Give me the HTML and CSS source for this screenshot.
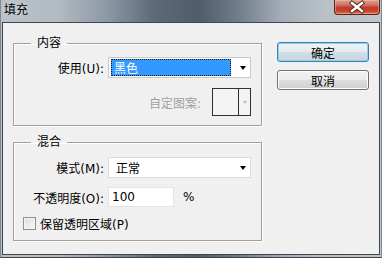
FILE: index.html
```html
<!DOCTYPE html>
<html lang="zh">
<head>
<meta charset="utf-8">
<title>填充</title>
<link rel="stylesheet" href="styles.css">
</head>
<body>
<div class="window">
  <div class="titlebar">
    <span class="title">填充</span>
    <div class="close">
      <svg width="46" height="15" viewBox="0 0 46 15">
        <path d="M18 3 L28 11 M28 3 L18 11" stroke="#4a2620" stroke-width="4.2" stroke-linecap="square" fill="none"/>
        <path d="M18 3 L28 11 M28 3 L18 11" stroke="#ffffff" stroke-width="2.4" stroke-linecap="square" fill="none"/>
      </svg>
    </div>
  </div>
  <div class="client">
    <div class="main">
      <fieldset class="group g-content">
        <legend>内容</legend>
        <div class="row">
          <span class="lbl">使用(U):</span>
          <div class="combo focused">
            <span class="sel"><span class="seltext">黑色</span></span>
            <span class="arrow"></span>
          </div>
        </div>
        <div class="row row-pattern">
          <span class="lbl-dis">自定图案:</span>
          <div class="pattern">
            <span class="swatch"></span>
            <span class="parrow"><span class="tri-dis"></span></span>
          </div>
        </div>
      </fieldset>
      <fieldset class="group g-blend">
        <legend>混合</legend>
        <div class="row">
          <span class="lbl">模式(M):</span>
          <div class="combo">
            <span class="val">正常</span>
            <span class="arrow"></span>
          </div>
        </div>
        <div class="row row-opacity">
          <span class="lbl">不透明度(O):</span>
          <div class="textbox">100</div>
          <span class="pct">%</span>
        </div>
        <div class="row row-check">
          <span class="checkbox"></span>
          <span class="cklabel">保留透明区域(P)</span>
        </div>
      </fieldset>
    </div>
    <div class="buttons">
      <button class="btn default">确定</button>
      <button class="btn">取消</button>
    </div>
  </div>
</div>
</body>
</html>
```
FILE: styles.css
```css
html, body {
  margin: 0;
  padding: 0;
}
body {
  width: 382px;
  height: 258px;
  overflow: hidden;
  font-family: "DejaVu Sans", "Noto Sans CJK SC", sans-serif;
  font-size: 12px;
  color: #000;
}
.window {
  width: 382px;
  height: 258px;
  box-sizing: border-box;
  display: flex;
  flex-direction: column;
  background: linear-gradient(90deg, #b9c0c8 0%, #b2bac2 15%, #8c98a4 28%, #5d6b79 40%, #4f5d6b 52%, #6e7b88 62%, #a4aeb8 74%, #b8c0c8 85%, #bfc5cc 100%);
  border-left: 1px solid #7d8894;
  border-right: 1px solid #7d8894;
  border-bottom: 1px solid #3e454d;
}
.titlebar {
  height: 22px;
  display: flex;
  justify-content: space-between;
  align-items: flex-start;
  padding: 0 1px 0 3px;
}
.title {
  margin-top: 3px;
  font-size: 12px;
  line-height: 14px;
  color: #000;
  text-shadow: 0 0 6px rgba(255,255,255,0.7);
}
.close {
  width: 46px;
  height: 15px;
  box-sizing: border-box;
  border: 1px solid #5a241c;
  border-top: none;
  border-radius: 0 0 4px 4px;
  background: linear-gradient(180deg, #dba292 0%, #cf7563 35%, #bd3b2a 55%, #c9462f 80%, #e07a50 100%);
  box-shadow: inset 0 0 0 1px rgba(255,190,170,0.45);
  display: flex;
  justify-content: center;
  align-items: center;
  overflow: hidden;
}
.close svg {
  display: block;
  flex: none;
}
.client {
  flex: 1;
  margin: 0 1px 2px 1px;
  border: 1px solid #3f464e;
  background: #f0f0f0;
  display: flex;
  padding: 13px 10px 0 10px;
}
.main {
  width: 249px;
  display: flex;
  flex-direction: column;
  gap: 9px;
}
.group {
  margin: 0;
  padding: 0 10px 0 0;
  border: 1px solid #a0a0a0;
  box-shadow: 1px 1px 0 #ffffff, inset 1px 1px 0 #ffffff;
  min-inline-size: 0;
}
.group legend {
  margin-left: 17px;
  padding: 0 6px;
  font-size: 12px;
  line-height: 14px;
}
.row {
  display: flex;
  align-items: center;
}
.lbl {
  width: 90px;
  text-align: right;
  margin-right: 4px;
  white-space: nowrap;
}
.g-content {
  padding-top: 7px;
  padding-bottom: 9px;
}
.combo {
  width: 143px;
  height: 21px;
  box-sizing: border-box;
  border: 1px solid #dadada;
  background: #ffffff;
  display: flex;
  align-items: center;
  padding: 0 0 0 2px;
}
.combo.focused {
  border-color: #c8c8c8;
}
.sel {
  width: 120px;
  height: 17px;
  box-sizing: border-box;
  background: #3399ff;
  outline: 1px dotted #1a1a1a;
  outline-offset: -1px;
  display: flex;
  align-items: center;
  padding-left: 3px;
}
.seltext {
  color: #fff;
}
.val {
  padding-left: 5px;
  flex: 1;
}
.arrow {
  margin-left: auto;
  margin-right: 4px;
  width: 0;
  height: 0;
  border-left: 3.5px solid transparent;
  border-right: 3.5px solid transparent;
  border-top: 4px solid #000;
}
.row-pattern {
  justify-content: flex-end;
  margin-top: 10px;
}
.lbl-dis {
  color: #a0a0a0;
  margin-right: 11px;
}
.pattern {
  width: 39px;
  height: 28px;
  box-sizing: border-box;
  border: 1px solid #2f2f2f;
  background: #f4f4f4;
  display: flex;
}
.swatch {
  width: 25px;
  border-right: 1px solid #2f2f2f;
}
.parrow {
  flex: 1;
  display: flex;
  align-items: center;
  justify-content: center;
}
.tri-dis {
  width: 0;
  height: 0;
  border-left: 2.5px solid transparent;
  border-right: 2.5px solid transparent;
  border-top: 3px solid #b8b8b8;
}
.g-blend {
  padding-top: 8px;
  padding-bottom: 8px;
}
.row-opacity {
  margin-top: 9px;
}
.textbox {
  width: 66px;
  height: 20px;
  box-sizing: border-box;
  border: 1px solid #e3e3e3;
  background: #fff;
  padding-left: 3px;
  line-height: 18px;
}
.pct {
  margin-left: 9px;
}
.row-check {
  margin-top: 8px;
  padding-left: 9px;
}
.checkbox {
  width: 13px;
  height: 13px;
  box-sizing: border-box;
  border: 1px solid #8e8f8f;
  background: linear-gradient(135deg, #dcdcdc 0%, #f4f4f4 80%, #ffffff 100%);
  box-shadow: inset 0 0 0 1px #f4f4f4;
}
.cklabel {
  margin-left: 4px;
}
.buttons {
  margin-left: auto;
  width: 92px;
  padding-top: 6px;
  display: flex;
  flex-direction: column;
  gap: 8px;
}
.btn {
  width: 92px;
  height: 20px;
  box-sizing: border-box;
  margin: 0;
  padding: 0;
  font-family: "DejaVu Sans", "Noto Sans CJK SC", sans-serif;
  font-size: 12px;
  color: #000;
  border: 1px solid #707070;
  border-radius: 3px;
  background: linear-gradient(180deg, #f2f2f2 0%, #ebebeb 48%, #dddddd 52%, #cfcfcf 100%);
  box-shadow: inset 0 0 0 1px #fcfcfc;
}
.btn.default {
  border-color: #3c7fb1;
  background: linear-gradient(180deg, #eef3f6 0%, #e4ebf0 48%, #d3dee6 52%, #c6d4de 100%);
  box-shadow: inset 0 0 0 1px #8fd0ef;
}
```
